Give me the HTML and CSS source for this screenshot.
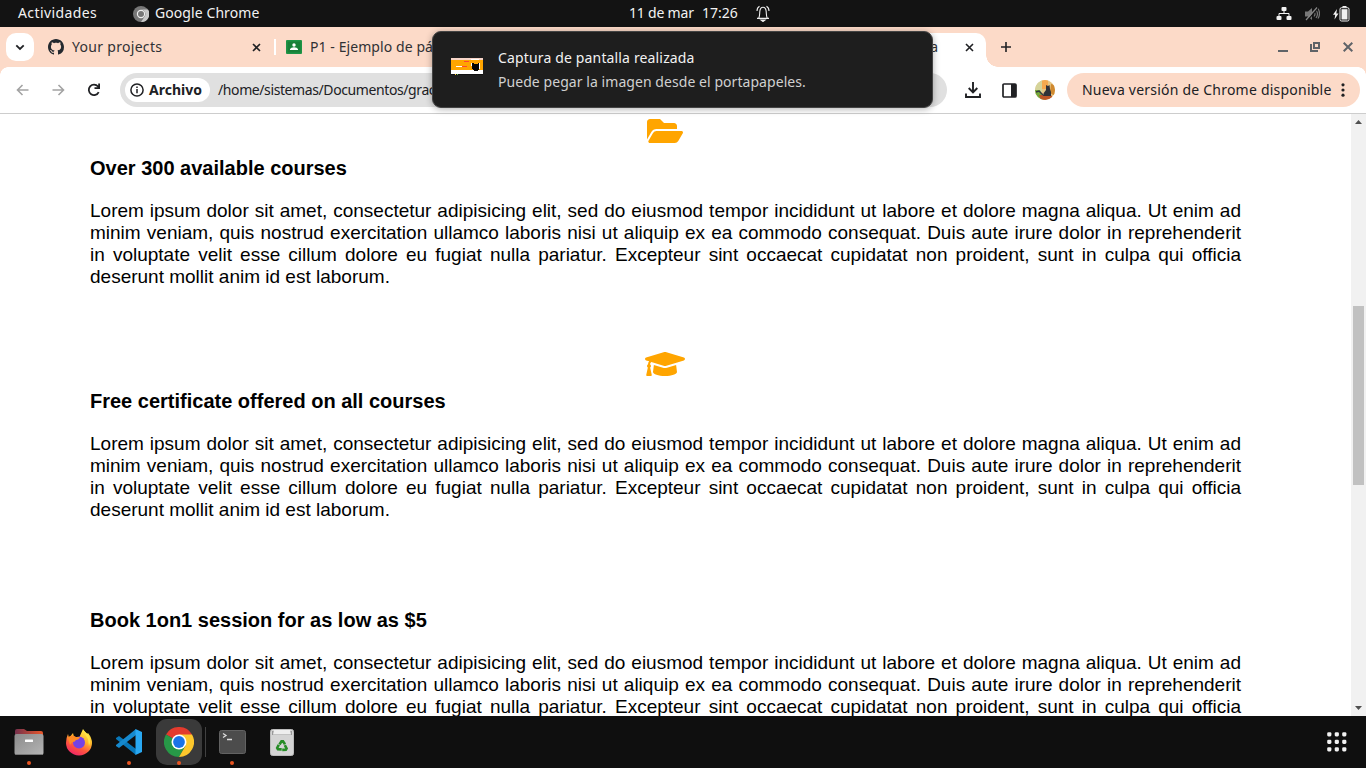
FILE: index.html
```html
<!DOCTYPE html>
<html lang="es">
<head>
<meta charset="utf-8">
<title>Courses</title>
<link rel="stylesheet" href="styles.css">
</head>
<body>
<div class="desktop">
  <header class="topbar">
    <span class="activities t-act">Actividades</span>
    <svg class="app-icon" width="16" height="16" viewBox="0 0 16 16"><circle cx="8" cy="8" r="8" fill="#777"/><path d="M8 3.5H15A8 8 0 0 1 8 16L12 10A4.5 4.5 0 0 0 8 3.5" fill="#c8c8c8"/><circle cx="8" cy="8" r="4.2" fill="#eee"/><circle cx="8" cy="8" r="3" fill="#777"/></svg>
    <span class="t-app">Google Chrome</span>
    <div class="clock"><span class="t-date">11 de mar</span><span class="t-time">17:26</span>
      <svg width="14" height="17" viewBox="0 0 14 17" fill="none" stroke="#eee" stroke-width="1.1"><path d="M1 13.4h12M2.8 13c1-2 .8-4 1-6.5C4 3.6 5.3 2.2 7 2.2s3 1.4 3.2 4.3c.2 2.500 0 4.500 1 6.500"/><path d="M3.500 1.200C1.600 2.200 1 4 1 6M10.500 1.200C12.400 2.200 13 4 13 6"/><path d="M5 15h4l-2 1.500z" fill="#eee"/></svg>
    </div>
    <div class="status">
      <svg width="16" height="14" viewBox="0 0 16 14" fill="#f2f2f2"><rect x="5.500" width="5" height="4" rx="1"/><rect x="0.500" y="9" width="5" height="4" rx="1"/><rect x="10.500" y="9" width="5" height="4" rx="1"/><path d="M8 4v3M3 9V6.500h10V9" fill="none" stroke="#f2f2f2"/></svg>
      <svg class="mute" width="15" height="14" viewBox="0 0 15 14"><path d="M0 4.500h3L7 1v12L3 9.500H0z" fill="#777"/><path d="M9 4.500q2 2.500 0 5M11 3q3 4 0 8M13 1.500q3 5 0 10" fill="none" stroke="#777" stroke-width="1.200"/><path d="M2 14L13 1" stroke="#131313" stroke-width="1.300"/><path d="M1 13L12 .5" stroke="#888" stroke-width="1.200"/></svg>
      <svg width="17" height="16" viewBox="0 0 17 16"><path d="M4 3L0 8.700h2.200L1.500 13.500 5.500 7.500H3.300z" fill="#f2f2f2"/><rect x="7" y="1.700" width="9" height="13.300" rx="1.500" fill="none" stroke="#f2f2f2"/><rect x="8.500" y="3.200" width="6" height="10.300" fill="#f2f2f2"/><path d="M9.500.7h4" stroke="#f2f2f2" stroke-width="1.400"/></svg>
    </div>
  </header>

  <div class="tabstrip">
    <div class="tab-search"><svg width="10" height="7" viewBox="0 0 10 7"><path d="M1.300 1.300L5 5l3.700-3.700" fill="none" stroke="#202124" stroke-width="1.800"/></svg></div>
    <svg class="github" width="16" height="16" viewBox="0 0 16 16"><path fill="#24292f" d="M8 0C3.58 0 0 3.58 0 8c0 3.54 2.29 6.53 5.47 7.59.4.07.55-.17.55-.38 0-.19-.01-.82-.01-1.49-2.01.37-2.53-.49-2.69-.94-.09-.23-.48-.94-.82-1.13-.28-.15-.68-.52-.01-.53.63-.01 1.08.58 1.23.82.72 1.21 1.87.87 2.33.66.07-.52.28-.87.51-1.07-1.78-.2-3.64-.89-3.64-3.95 0-.87.31-1.59.82-2.15-.08-.2-.36-1.02.08-2.12 0 0 .67-.21 2.2.82.64-.18 1.32-.27 2-.27s1.36.09 2 .27c1.53-1.04 2.2-.82 2.2-.82.44 1.1.16 1.92.08 2.12.51.56.82 1.27.82 2.15 0 3.07-1.87 3.75-3.65 3.95.29.25.54.73.54 1.48 0 1.07-.01 1.93-.01 2.2 0 .21.15.46.55.38A8.01 8.01 0 0 0 16 8c0-4.42-3.58-8-8-8z"/></svg>
    <span class="tab-name first t-projects">Your projects</span>
    <svg class="x1" width="9" height="9" viewBox="0 0 9 9"><path d="M1 1l7 7M8 1L1 8" stroke="#202124" stroke-width="1.600"/></svg>
    <i class="tab-sep"></i>
    <svg class="classroom" width="16" height="14" viewBox="0 0 16 14"><rect width="16" height="14" rx="1" fill="#1e9446"/><rect x="1.500" y="1.500" width="13" height="11" fill="#188038"/><circle cx="8" cy="5" r="1.700" fill="#fff"/><path d="M4 10V9q1-1.800 4-1.800T12 9v1z" fill="#fff"/></svg>
    <span class="tab-name t-p1">P1 - Ejemplo de pá</span>
    <div class="tab-active"><span class="t-a">a</span><svg width="9" height="9" viewBox="0 0 9 9"><path d="M1 1l7 7M8 1L1 8" stroke="#202124" stroke-width="1.600"/></svg></div>
    <svg class="plus" width="10" height="10" viewBox="0 0 10 10"><path d="M5 0v10M0 5h10" stroke="#202124" stroke-width="1.600"/></svg>
    <div class="winctl">
      <svg width="10" height="10" viewBox="0 0 10 10"><path d="M0 9h10" stroke="#5f6368" stroke-width="2"/></svg>
      <svg width="10" height="10" viewBox="0 0 10 10" fill="none" stroke="#5f6368" stroke-width="2"><path d="M4 1h5v5H4zM1 2v7h7"/></svg>
      <svg width="10" height="10" viewBox="0 0 10 10"><path d="M.7.7l8.600 8.600M9.300.7L.7 9.300" stroke="#5f6368" stroke-width="2"/></svg>
    </div>
  </div>

  <div class="toolbar">
    <svg class="back" width="13" height="12" viewBox="0 0 13 12" fill="none" stroke="#a3a3a3" stroke-width="1.600"><path d="M12.500 6H1.500M6.500 1l-5 5 5 5"/></svg>
    <svg class="fwd" width="13" height="12" viewBox="0 0 13 12" fill="none" stroke="#a3a3a3" stroke-width="1.600"><path d="M.5 6h11M6.500 1l5 5-5 5"/></svg>
    <svg class="reload" width="14" height="14" viewBox="0 0 14 14" fill="none" stroke="#202124" stroke-width="1.800"><path d="M11.700 9.100A5.200 5.200 0 1 1 11 3.500L12 4.700M12.100.5v4.700H7.500"/></svg>
    <div class="omnibox">
      <div class="chip"><svg width="14" height="14" viewBox="0 0 14 14"><circle cx="7" cy="7" r="6.100" fill="none" stroke="#202124" stroke-width="1.500"/><path d="M7 6v4.300M7 3.500v1.500" stroke="#202124" stroke-width="1.500"/></svg><b class="t-file">Archivo</b></div>
      <span class="t-url">/home/sistemas/Documentos/grac</span>
    </div>
    <svg class="download" width="16" height="16" viewBox="0 0 16 16" fill="none" stroke="#202124" stroke-width="1.900"><path d="M8 0v10M3.700 6L8 10.300 12.300 6M1 11.500V15h14v-3.500"/></svg>
    <svg class="panel" width="15" height="15" viewBox="0 0 15 15"><rect x="1" y="1" width="13" height="13" rx="1" fill="none" stroke="#202124" stroke-width="1.700"/><path d="M9 1h5v13H9z" fill="#202124"/></svg>
    <svg class="avatar" width="20" height="20" viewBox="0 0 20 20"><defs><clipPath id="av"><circle cx="10" cy="10" r="10"/></clipPath></defs><g clip-path="url(#av)"><path d="M0 0h20v20H0z" fill="#e5c584"/><path d="M0 0h7v12H0z" fill="#d5d49a"/><path d="M7 0h6v9H7z" fill="#f5a94f"/><path d="M0 10h5l4 10H0z" fill="#73a83a"/><path d="M16 4l4 1v11l-5-3z" fill="#d0892f"/><path d="M4 15h12l2 3-6 2H6z" fill="#bd5626"/><path d="M11 5l2 1 1.500-1 .5 4 1 3v4H8q0-3 3-6z" fill="#303238"/><path d="M8 15L4 11 1 12" fill="none" stroke="#333842" stroke-width="1.500"/></g></svg>
    <div class="update"><span class="t-update">Nueva versión de Chrome disponible</span><svg width="4" height="14" viewBox="0 0 4 14" fill="#202124"><circle cx="2" cy="1.800" r="1.600"/><circle cx="2" cy="7" r="1.600"/><circle cx="2" cy="12.200" r="1.600"/></svg></div>
  </div>

  <div class="viewport">
    <main class="page">
      <section class="course">
        <svg class="glyph" width="36" height="32" viewBox="0 0 576 512"><path fill="orange" d="M572.694 292.093L500.27 416.248A63.997 63.997 0 0 1 444.989 448H45.025c-18.523 0-30.064-20.093-20.731-36.093l72.424-124.155A64 64 0 0 1 152 256h399.964c18.523 0 30.064 20.093 20.73 36.093zM152 224h328v-48c0-26.51-21.49-48-48-48H272l-64-64H48C21.49 64 0 85.49 0 112v278.046l69.077-118.418C86.214 242.25 117.989 224 152 224z"/></svg>
        <h3>Over 300 available courses</h3>
        <p>Lorem ipsum dolor sit amet, consectetur adipisicing elit, sed do eiusmod tempor incididunt ut labore et dolore magna aliqua. Ut enim ad minim veniam, quis nostrud exercitation ullamco laboris nisi ut aliquip ex ea commodo consequat. Duis aute irure dolor in reprehenderit in voluptate velit esse cillum dolore eu fugiat nulla pariatur. Excepteur sint occaecat cupidatat non proident, sunt in culpa qui officia deserunt mollit anim id est laborum.</p>
      </section>
      <section class="course">
        <svg class="glyph" width="40" height="32" viewBox="0 0 640 512"><path fill="orange" d="M622.34 153.2L343.4 67.5c-15.2-4.67-31.6-4.67-46.79 0L17.66 153.2c-23.54 7.23-23.54 38.36 0 45.59l48.63 14.94c-10.67 13.19-17.23 29.28-17.88 46.9C38.78 266.15 32 276.11 32 288c0 10.78 5.68 19.85 13.86 25.65L20.33 428.53C18.11 438.52 25.71 448 35.94 448h56.11c10.24 0 17.84-9.48 15.62-19.47L82.14 313.65C90.32 307.85 96 298.78 96 288c0-11.57-6.47-21.25-15.66-26.87.76-15.02 8.44-28.3 20.69-36.72L296.6 284.5c9.06 2.78 26.44 6.25 46.79 0l278.95-85.7c23.55-7.24 23.55-38.36 0-45.6zM352.79 315.09c-28.53 8.76-52.84 3.92-65.59 0l-145.02-44.55L128 384c0 35.35 85.96 64 192 64s192-28.65 192-64l-14.18-113.47-145.03 44.56z"/></svg>
        <h3>Free certificate offered on all courses</h3>
        <p>Lorem ipsum dolor sit amet, consectetur adipisicing elit, sed do eiusmod tempor incididunt ut labore et dolore magna aliqua. Ut enim ad minim veniam, quis nostrud exercitation ullamco laboris nisi ut aliquip ex ea commodo consequat. Duis aute irure dolor in reprehenderit in voluptate velit esse cillum dolore eu fugiat nulla pariatur. Excepteur sint occaecat cupidatat non proident, sunt in culpa qui officia deserunt mollit anim id est laborum.</p>
      </section>
      <section class="course plain">
        <h3>Book 1on1 session for as low as $5</h3>
        <p>Lorem ipsum dolor sit amet, consectetur adipisicing elit, sed do eiusmod tempor incididunt ut labore et dolore magna aliqua. Ut enim ad minim veniam, quis nostrud exercitation ullamco laboris nisi ut aliquip ex ea commodo consequat. Duis aute irure dolor in reprehenderit in voluptate velit esse cillum dolore eu fugiat nulla pariatur. Excepteur sint occaecat cupidatat non proident, sunt in culpa qui officia</p>
      </section>
    </main>
    <div class="scrollbar">
      <svg width="7" height="4" viewBox="0 0 7 4"><path d="M0 4L3.500 0 7 4z" fill="#505050"/></svg>
      <div class="thumb"></div>
      <svg class="down" width="7" height="4" viewBox="0 0 7 4"><path d="M0 0l3.500 4L7 0z" fill="#505050"/></svg>
    </div>
  </div>

  <footer class="dock">
    <div class="dock-item running"><svg width="30" height="28" viewBox="0 0 30 28"><defs><linearGradient id="fg"><stop stop-color="#74304c"/><stop offset="1" stop-color="#e9582b"/></linearGradient><linearGradient id="fb" x2="1" y2="1"><stop stop-color="#8b8b8b"/><stop offset="1" stop-color="#b5b5b5"/></linearGradient></defs><path d="M1 3q0-2 2-2h7l3 2h14q2 0 2 2v9H1z" fill="url(#fg)"/><rect x=".5" y="6" width="29" height="21" rx="2" fill="url(#fb)"/><path d="M2 26.500h26" stroke="#777"/><rect x="11" y="11.500" width="8" height="2.500" rx=".5" fill="#fff"/></svg></div>
    <div class="dock-item"><svg width="28" height="28" viewBox="0 0 28 28"><defs><linearGradient id="ff" x1=".8" y1="0" x2=".3" y2="1"><stop stop-color="#fff44f"/><stop offset=".4" stop-color="#ffb52a"/><stop offset=".7" stop-color="#ff543f"/><stop offset="1" stop-color="#ef2368"/></linearGradient></defs><path d="M3 6l1 4 4-5 1 4 5 1 4-9q2 3 4 5l1-1q4 5 4 10a13 12.500 0 0 1-26 0Q1 10 3 6z" fill="url(#ff)"/><circle cx="14" cy="14.500" r="6" fill="#7542e5"/><path d="M3 9q5-3 8 0h4q-1 3-4 3l-2 2q-2-1-4 3z" fill="#ff8b25"/><path d="M18 2q2 5 5 9l1 7q4-9-6-16z" fill="#ffe447"/></svg></div>
    <div class="dock-item running"><svg width="28" height="28" viewBox="0 0 28 28"><path d="M1 10l3-2 17 13v6L1 11z" fill="#0877b9"/><path d="M1 18l3 2L21 7V1L1 17z" fill="#1689ce"/><path d="M20.500 1L27 4v20l-6.500 3z" fill="#29a8f2"/></svg></div>
    <div class="dock-item running current"><svg width="30" height="30" viewBox="0 0 30 30"><path d="M15 15L2 7.500A15 15 0 0 1 28 7.500z" fill="#e33b2e"/><path d="M2 7.500A15 15 0 0 0 15 30l6.500-11.200L15 15z" fill="#279847"/><path d="M28 7.500H15l6.500 11.300L15 30A15 15 0 0 0 28 7.500z" fill="#fcc72c"/><circle cx="15" cy="15" r="7.500" fill="#fff"/><circle cx="15" cy="15" r="5.900" fill="#1a73e8"/></svg></div>
    <i class="dock-sep"></i>
    <div class="dock-item running term"><svg width="27" height="24" viewBox="0 0 27 24"><rect x=".5" y=".5" width="26" height="23" rx="2" fill="#4c4c4c" stroke="#626262"/><path d="M4 3.500l3 2L4 7.500M8 9.500h5" fill="none" stroke="#ddd" stroke-width="1.300"/></svg></div>
    <div class="dock-item trash"><svg width="24" height="27" viewBox="0 0 24 27"><rect x=".5" y=".5" width="23" height="26" rx="2" fill="#d4d4d4" stroke="#bbb"/><path d="M2 2h20v4H2z" fill="#999"/><path d="M4 1h16l1 4.500H3z" fill="#eee"/><g transform="translate(12 17.300)" fill="none" stroke="#258c25" stroke-width="2.600"><path d="M-2.500-1.800L-.5-5h1.500L3-2"/><path d="M-2.500-1.800L-.5-5h1.500L3-2" transform="rotate(120)"/><path d="M-2.500-1.800L-.5-5h1.500L3-2" transform="rotate(240)"/></g></svg></div>
    <svg class="apps" width="20" height="20" viewBox="0 0 20 20" fill="#f2f2f2"><g id="row"><rect x=".2" y=".2" width="4.200" height="4.200" rx="1.300"/><rect x="7.700" y=".2" width="4.200" height="4.200" rx="1.300"/><rect x="15.200" y=".2" width="4.200" height="4.200" rx="1.300"/></g><use href="#row" y="7.500"/><use href="#row" y="15"/></svg>
  </footer>

  <aside class="notification">
    <svg width="32" height="17" viewBox="0 0 32 17" shape-rendering="crispEdges"><path d="M0 0h32v17H0z" fill="#fff"/><path d="M0 0h32v2H0z" fill="#f7d5c8"/><path d="M0 2h32v10H0z" fill="orange"/><path d="M20 1h8v1h-8zM5 8h7v1H5zM20 5h1v3h-1zM28 5h1v6h-1z" fill="#fff"/><path d="M11 8h5v1h-5zM13 3h5v1h-5z" fill="#f43"/><path d="M21 5h1l2 1h2l2-1v6l-2 2h-3l-2-2z" fill="#050505"/><path d="M0 16h32v1H0z" fill="#111"/><path d="M4 16h1v1H4z" fill="#fc3"/><path d="M6 16h1v1H6z" fill="#6b5"/></svg>
    <div class="note-text"><span class="t-n1">Captura de pantalla realizada</span><span class="t-n2">Puede pegar la imagen desde el portapapeles.</span></div>
  </aside>
</div>
</body>
</html>
```
FILE: styles.css
```css
* { box-sizing: border-box; }
body { margin: 0; font-family: "Noto Sans", "Open Sans", sans-serif; font-size: 14px; overflow: hidden; }
svg { display: block; flex: none; }
span, b { white-space: nowrap; }
.desktop { position: relative; width: 1366px; height: 768px; display: flex; flex-direction: column; background: #fff; }

.topbar { position: relative; height: 27px; flex: none; display: flex; align-items: center; background: #131313; color: #f2f2f2; padding: 0 16px 0 18px; line-height: 26px; }
.activities { width: 115px; }
.activities, .t-app { padding-bottom: 1px; }
.app-icon { margin-right: 6px; }
.clock { position: absolute; left: 629px; top: 0; height: 26px; display: flex; align-items: center; }
.t-date { width: 73px; }
.t-time { width: 54px; }
.status { margin-left: auto; display: flex; align-items: center; gap: 13px; }

.tabstrip { height: 40px; flex: none; display: flex; align-items: center; background: #fcdac8; color: #303134; padding-left: 6px; padding-right: 13px; }
.tab-search { width: 28px; height: 28px; border-radius: 10px; background: #fff; display: grid; place-items: center; }
.github { margin: 0 8px 0 14px; }
.tab-name { padding-bottom: 2px; }
.tab-name.first { width: 180px; }
.tab-sep { width: 2px; height: 16px; background: #fff; margin: 0 11px 0 13px; }
.classroom { margin: 0 8px 0 -1px; }
.t-p1 { width: 580px; }
.tab-active { position: relative; width: 96px; height: 34px; align-self: flex-end; display: flex; align-items: center; justify-content: flex-end; padding: 0 12px 6px 0; background: #fff; border-radius: 0 10px 0 0; }
.tab-active::after { content: ""; position: absolute; left: 100%; bottom: 0; width: 12px; height: 12px; background: radial-gradient(circle at 100% 0, transparent 11.500px, #fff 12px); }
.t-a { margin-right: 27px; padding-bottom: 2px; }
.plus { margin-left: 15px; }
.winctl { margin-left: auto; display: flex; gap: 22px; }
.winctl svg:last-child { margin-left: 1px; }

.toolbar { position: relative; height: 47px; flex: none; display: flex; align-items: center; border-bottom: 1px solid #cdcdcd; padding: 0 6px 0 16px; color: #202124; background: radial-gradient(circle at 8px 8px, #fff 7.500px, #fcdac8 8px) 0 0 / 8px 8px no-repeat, linear-gradient(#fff, #fff); }
.toolbar::after { content: ""; position: absolute; right: 0; top: 0; width: 8px; height: 8px; background: radial-gradient(circle at 0 100%, transparent 7.500px, #fcdac8 8px); }
.fwd { margin-left: 23px; }
.reload { margin-left: 22px; }
.omnibox { width: 827px; height: 34px; border-radius: 17px; background: #e0e0e0; margin-left: 19px; display: flex; align-items: center; padding-left: 5px; }
.chip { width: 85px; height: 24px; border-radius: 12px; background: #fff; display: flex; align-items: center; padding-left: 5px; gap: 5px; margin-right: 8px; }
.download { margin-left: 18px; }
.panel { margin-left: 21px; }
.avatar { margin-left: 18px; }
.update { width: 293px; height: 34px; margin-left: 12px; border-radius: 17px; background: #fcdac8; display: flex; align-items: center; justify-content: space-between; padding: 0 15px; }
.t-file, .t-url, .t-update { padding-bottom: 1px; }

.viewport { height: 602px; flex: none; display: flex; background: #fff; overflow: hidden; }
.page { flex: 1; padding: 1px 110px 0 90px; font-family: "Liberation Sans", Arial, sans-serif; color: #000; }
.course { height: 233px; }
.course.plain { padding-top: 28px; }
.glyph { margin: 0 auto; transform: translateX(-1px); }
.course h3 { margin: 10px 0 20px; font-size: 20px; line-height: 23px; }
.course.plain h3 { margin-top: 0; }
.course p { margin: 0; font-size: 19px; line-height: 22px; text-align: justify; }
.course.plain p { text-align-last: justify; }
.scrollbar { width: 15px; background: #f1f1f1; display: flex; flex-direction: column; align-items: center; padding: 6px 0; }
.thumb { width: 11px; height: 179px; background: #c1c1c1; margin-top: 182px; }
.scrollbar .down { margin-top: auto; }

.dock { height: 52px; flex: none; display: flex; align-items: center; background: #0f0f0f; padding: 0 19px 0 6px; }
.dock-item { position: relative; width: 46px; height: 46px; display: grid; place-items: center; margin-right: 4px; }
.current { background: #3a3a3a; border-radius: 11px; }
.running::after { content: ""; position: absolute; left: 21px; bottom: 0; width: 4px; height: 4px; border-radius: 2px; background: #e95420; }
.dock-sep { width: 1px; height: 30px; background: #414141; margin: 0 3px 0 -1px; }
.apps { margin-left: auto; }

.notification { position: absolute; left: 432px; top: 31px; width: 501px; height: 77px; border-radius: 9px; background: #1e1e1e; border: 1px solid #444; box-shadow: 0 1px 7px rgba(0,0,0,.32); display: flex; align-items: center; padding: 0 18px; color: #f2f2f2; }
.notification > svg { margin-top: -7px; }
.note-text { display: flex; flex-direction: column; line-height: 24px; margin-left: 15px; }
.t-n2 { color: #d0d0d0; }

.t-act { letter-spacing: .4px; }
.t-app { letter-spacing: .08px; }
.t-date { letter-spacing: -.2px; }
.t-projects { letter-spacing: .3px; }
.t-p1 { letter-spacing: .08px; }
.t-file { letter-spacing: 0; }
.t-url { letter-spacing: -.4px; }
.t-update { letter-spacing: .22px; }
.t-n1 { letter-spacing: .15px; }
.t-n2 { letter-spacing: .06px; }
```
